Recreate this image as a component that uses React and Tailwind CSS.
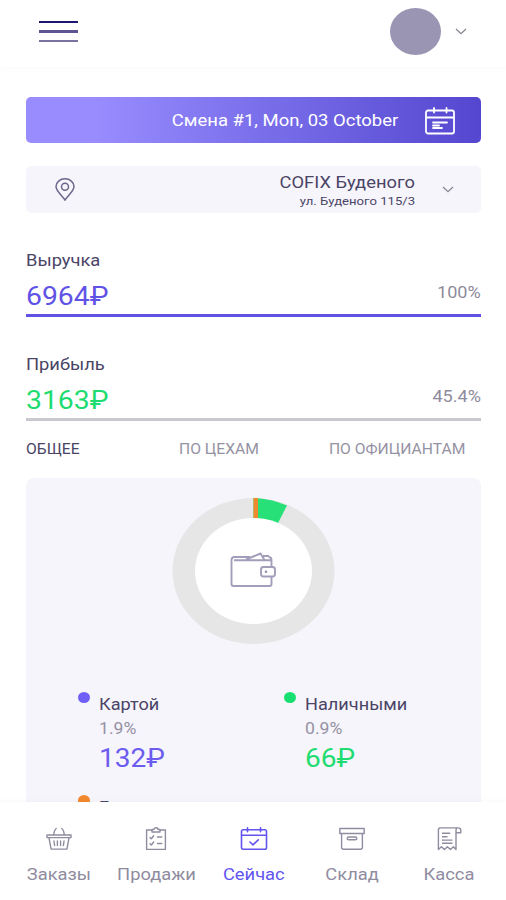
import React from 'react';

const stats = [
  { label: 'Выручка', value: '6964₽', percent: '100%', text: 'text-[#6152e6]', line: 'bg-[#6152e6]' },
  { label: 'Прибыль', value: '3163₽', percent: '45.4%', text: 'text-[#1fdc70]', line: 'bg-[#c8c8cf]' },
];

const payments = [
  { label: 'Картой', percent: '1.9%', value: '132₽', text: 'text-[#6c5cf0]', dot: 'bg-[#6f5ff5]' },
  { label: 'Наличными', percent: '0.9%', value: '66₽', text: 'text-[#1fdc70]', dot: 'bg-[#18e070]' },
  { label: 'Бонусами', dot: 'bg-[#f08a2c]' },
];

function Chevron() {
  return (
    <svg className="w-3 h-[7px]" viewBox="0 0 12 7" fill="none" stroke="#85828f" strokeWidth="1.2">
      <path d="M1 1l5 4.6L11 1" />
    </svg>
  );
}

function BasketIcon() {
  return (
    <svg className="w-[26px] h-6" viewBox="0 0 26 24" fill="none" stroke="currentColor" strokeWidth="1.4" strokeLinejoin="round" strokeLinecap="round">
      <path d="M1 8h24v2.6H1zM3 10.8l2.1 11.3h15.8L23 10.8M10.2 1.5c-1.5 1-2 3-2.5 6M15.8 1.5c1.5 1 2 3 2.5 6M8 14l.6 4.5M11.4 14v4.5M14.6 14v4.5M18 14l-.6 4.5" />
    </svg>
  );
}

function ClipboardIcon() {
  return (
    <svg className="w-[26px] h-6" viewBox="0 0 26 24" fill="none" stroke="currentColor" strokeWidth="1.4" strokeLinejoin="round" strokeLinecap="round">
      <path d="M9 3H3.6v19.4h18.8V3H17M9 5V2.5h2a2 1.7 0 0 1 4 0h2V5zM7 10.5l1.3 1.2 2.4-3M7 16.8l1.3 1.2 2.4-3M14.5 10h4.3M14.5 16.5h4.3" />
    </svg>
  );
}

function CalendarCheckIcon() {
  return (
    <svg className="w-[28px] h-6" viewBox="0 0 28 24" fill="none" stroke="currentColor" strokeWidth="1.6" strokeLinejoin="round" strokeLinecap="round">
      <path d="M3 2.8h22a1.5 1.5 0 0 1 1.5 1.5v16.5a1.5 1.5 0 0 1-1.5 1.5H3a1.5 1.5 0 0 1-1.5-1.5V4.3A1.5 1.5 0 0 1 3 2.8zM1.5 8.3h25M7.5.8v4M20.5.8v4M10 15l3 2.8 5.3-5" />
    </svg>
  );
}

function BoxIcon() {
  return (
    <svg className="w-[28px] h-6" viewBox="0 0 28 24" fill="none" stroke="currentColor" strokeWidth="1.4" strokeLinejoin="round">
      <path d="M1.8 1.5h24.4v5H1.8zM3.6 6.5v13.8a2 2 0 0 0 2 2h16.8a2 2 0 0 0 2-2V6.5" />
      <rect x="9.2" y="10" width="9.6" height="2.8" rx="1.4" />
    </svg>
  );
}

function ReceiptIcon() {
  return (
    <svg className="w-[28px] h-6" viewBox="0 0 28 24" fill="none" stroke="currentColor" strokeWidth="1.4" strokeLinejoin="round">
      <path d="M23.3.9H5.2A2 2 0 0 0 3.4 3v19.6l3-2.8 3 2.8 3-2.8 3 2.8 3-2.8 2.6 2.8V3c0-1.3.8-2.1 2.1-2.1 1.5 0 2.7.9 2.7 2.3v2.5H21M7 6.3h8.2M7 9.7h5.5M7 13.1h10.5M7 16.3h10.5" />
    </svg>
  );
}

const tabs = [
  { label: 'Заказы', icon: BasketIcon },
  { label: 'Продажи', icon: ClipboardIcon },
  { label: 'Сейчас', icon: CalendarCheckIcon, active: true },
  { label: 'Склад', icon: BoxIcon },
  { label: 'Касса', icon: ReceiptIcon },
];

function Header() {
  return (
    <header className="flex h-[67px] shrink-0 items-start justify-between pl-[39px] pr-[39px] shadow-[0_2px_5px_rgba(0,0,0,0.025)]">
      <button className="mt-[21px] flex flex-col gap-[7px]">
        <span className="h-[2.4px] w-[39px] bg-[#1d1570]" />
        <span className="h-[2.4px] w-[39px] bg-[#5f5590]" />
        <span className="h-[2.4px] w-[39px] bg-[#7a729f]" />
      </button>
      <div className="mt-[8px] flex items-center gap-[14px]">
        <div className="h-[47px] w-[51px] rounded-[50%] bg-[#9a95b3]" />
        <Chevron />
      </div>
    </header>
  );
}

function Stat({ item }) {
  return (
    <div>
      <p className="text-[16.5px] leading-5"><span className="inline-block origin-left scale-x-[1.11]">{item.label}</span></p>
      <div className="mt-[9px] flex h-8 justify-between">
        <span className={`origin-left scale-x-[1.09] text-[26px] leading-8 ${item.text}`}>{item.value}</span>
        <span className="mt-[3px] origin-right scale-x-[1.13] text-[16px] leading-5 text-[#8e8b9c]">{item.percent}</span>
      </div>
      <div className={`mt-[2px] h-[3px] ${item.line}`} />
    </div>
  );
}

function Donut() {
  return (
    <svg className="mx-auto block h-[148px] w-[164px]" viewBox="0 0 164 148">
      <ellipse cx="81.5" cy="74" rx="81" ry="73" fill="#e6e6e6" />
      <path d="M81.5 74V1a81 73 0 0 1 33.5 7.5z" fill="#27e077" />
      <path d="M81.500 1h4.500v22h-4.500z" fill="#ee8a2d" />
      <ellipse cx="81.5" cy="74" rx="58.5" ry="53" fill="#fff" />
      <g fill="none" stroke="#a29db9" strokeWidth="1.9" strokeLinejoin="round">
        <path d="M99.500 70V63a3 3 0 0 0-3-3M78 60H62a3 3 0 0 0-2.500 3v24a2 2 0 0 0 2 2H97.500a2 2 0 0 0 2-2V80M62 63.200H99M74 62.500l14.500-6 4 6.500M91 59h6" />
        <rect x="89" y="70" width="14" height="9.500" rx="2.500" />
      </g>
      <circle cx="94" cy="74.800" r="1.200" fill="#8f89aa" />
    </svg>
  );
}

export default function App() {
  return (
    <div className="flex h-[900px] w-[506px] flex-col overflow-hidden bg-white font-[Roboto,sans-serif] text-[#4a4466]">
      <Header />

      <main className="min-h-0 flex-1 overflow-hidden pl-[26px] pr-[25px] pt-[30px]">
        <button className="flex h-[46px] w-full items-center justify-end rounded-[5px] bg-linear-to-r from-[#998cff] from-15% to-[#5546cf] pr-[26px] pt-[2px] text-white">
          <span className="origin-right scale-x-[1.12] text-[16.5px] leading-5">Смена #1, Mon, 03 October</span>
          <svg className="ml-[27px] h-7 w-[30px]" viewBox="0 0 30 28" fill="none" stroke="#fff" strokeWidth="1.8" strokeLinejoin="round" strokeLinecap="round">
            <path d="M3 3.500h24a2 2 0 0 1 2 2v19a2 2 0 0 1-2 2H3a2 2 0 0 1-2-2v-19a2 2 0 0 1 2-2zM1 10.500h28M9 1v4.500M21.500 1v4.500M8 15.500h14M8 18.500h6M8 21h9" />
          </svg>
        </button>

        <button className="mt-[23px] flex h-[47px] w-full items-center rounded-[5px] bg-[#f6f5fb] pl-[29px] pr-[27px]">
          <svg className="h-[23px] w-5" viewBox="0 0 20 23" fill="none" stroke="#6d668c" strokeWidth="1.500">
            <path d="M10 22C7 17.500 1 13 1 8.500a9 7.700 0 0 1 18 0C19 13 13 17.500 10 22z" />
            <circle cx="10" cy="8.700" r="3.500" />
          </svg>
          <div className="ml-auto flex flex-col items-end pt-[2px] text-right">
            <span className="origin-right scale-x-[1.11] text-[16.5px] leading-5">COFIX Буденого</span>
            <span className="origin-right scale-x-[1.14] text-[11.5px] leading-4">ул. Буденого 115/3</span>
          </div>
          <span className="ml-[27px]"><Chevron /></span>
        </button>

        <section className="mt-[38px] flex flex-col gap-[37.5px]">
          {stats.map((item) => <Stat key={item.label} item={item} />)}
        </section>

        <div className="mt-[19px] flex pr-4 text-[14.5px] leading-5 text-[#9592a3]">
          <span className="origin-left scale-x-[1.08] text-[#4a4466]">ОБЩЕЕ</span>
          <span className="ml-[103px] origin-left scale-x-[1.08]">ПО ЦЕХАМ</span>
          <span className="ml-auto origin-right scale-x-[1.08]">ПО ОФИЦИАНТАМ</span>
        </div>

        <section className="mt-[18px] rounded-[8px] bg-[#f6f5fb] pb-10 pt-[19px]">
          <Donut />
          <div className="mt-[50px] grid grid-cols-[206px_1fr] gap-y-[17.5px] pl-[52px]">
            {payments.map((item) => (
              <div key={item.label} className="flex h-[86px] items-start">
                <span className={`mt-[-3px] h-[11px] w-3 rounded-[50%] ${item.dot}`} />
                <div className="ml-[9px] flex origin-left scale-x-[1.1] flex-col">
                  <span className="text-[16.5px] leading-5">{item.label}</span>
                  {item.percent && <span className="mt-1 text-[16px] leading-5 text-[#9592a3]">{item.percent}</span>}
                  {item.value && <span className={`mt-[3px] text-[25.5px] leading-8 ${item.text}`}>{item.value}</span>}
                </div>
              </div>
            ))}
          </div>
        </section>
      </main>

      <nav className="z-10 flex h-[98px] shrink-0 bg-white pl-[10px] pr-[8px] shadow-[0_-2px_5px_rgba(0,0,0,0.025)]">
        {tabs.map(({ label, icon: Icon, active }) => (
          <button key={label} className={`flex flex-1 flex-col items-center pt-[25px] ${active ? 'text-[#6254ee]' : 'text-[#8f8c9f]'}`}>
            <Icon />
            <span className="mt-[14px] scale-x-[1.11] text-[16.5px] leading-5">{label}</span>
          </button>
        ))}
      </nav>
    </div>
  );
}
